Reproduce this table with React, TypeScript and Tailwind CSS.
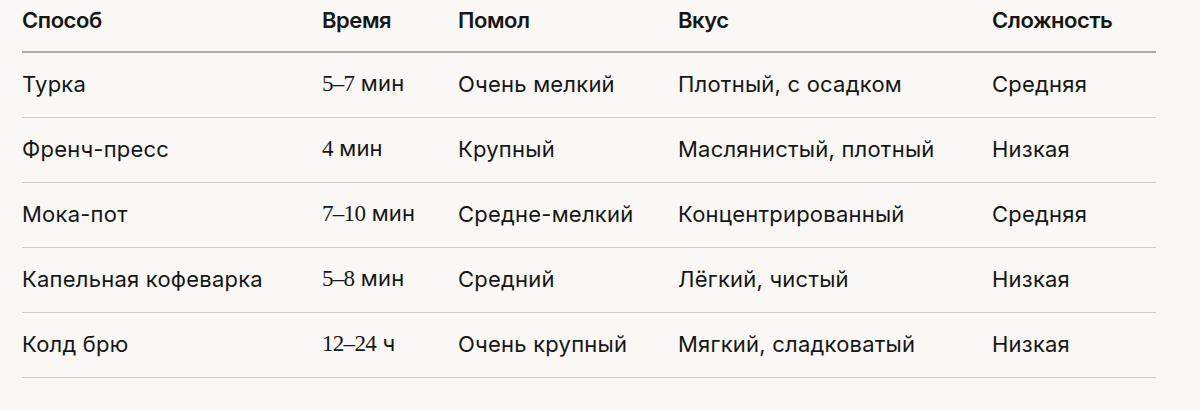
import React from "react"

type Row = {
  method: string
  time: [string, string]
  grind: string
  taste: string
  level: string
}

const rows: Row[] = [
  { method: "Турка", time: ["5–7", "мин"], grind: "Очень мелкий", taste: "Плотный, с осадком", level: "Средняя" },
  { method: "Френч-пресс", time: ["4", "мин"], grind: "Крупный", taste: "Маслянистый, плотный", level: "Низкая" },
  { method: "Мока-пот", time: ["7–10", "мин"], grind: "Средне-мелкий", taste: "Концентрированный", level: "Средняя" },
  { method: "Капельная кофеварка", time: ["5–8", "мин"], grind: "Средний", taste: "Лёгкий, чистый", level: "Низкая" },
  { method: "Колд брю", time: ["12–24", "ч"], grind: "Очень крупный", taste: "Мягкий, сладковатый", level: "Низкая" },
]

const cols = "grid grid-cols-[300px_136px_220px_314px_164px]"

export default function App() {
  return (
    <div className="min-h-[410px] bg-[#f9f8f4] px-[22px] text-[#161616] font-['Inter',sans-serif] text-[22px]">
      <div className="w-[1134px]">
        <div className={`${cols} h-[53px] items-center border-b-2 border-[#ababa8] pb-[10px] font-semibold tracking-[-0.02em]`}>
          <div>Способ</div>
          <div>Время</div>
          <div>Помол</div>
          <div>Вкус</div>
          <div>Сложность</div>
        </div>
        {rows.map((r) => (
          <div key={r.method} className={`${cols} h-[65px] items-center border-b border-[#cfcfcb] pb-[2px] tracking-[0.01em]`}>
            <div>{r.method}</div>
            <div>
              <span className="font-['Liberation_Serif',serif] text-[23px] tracking-[-0.03em]">{r.time[0]}</span>{" "}
              <span>{r.time[1]}</span>
            </div>
            <div>{r.grind}</div>
            <div>{r.taste}</div>
            <div>{r.level}</div>
          </div>
        ))}
      </div>
    </div>
  )
}
